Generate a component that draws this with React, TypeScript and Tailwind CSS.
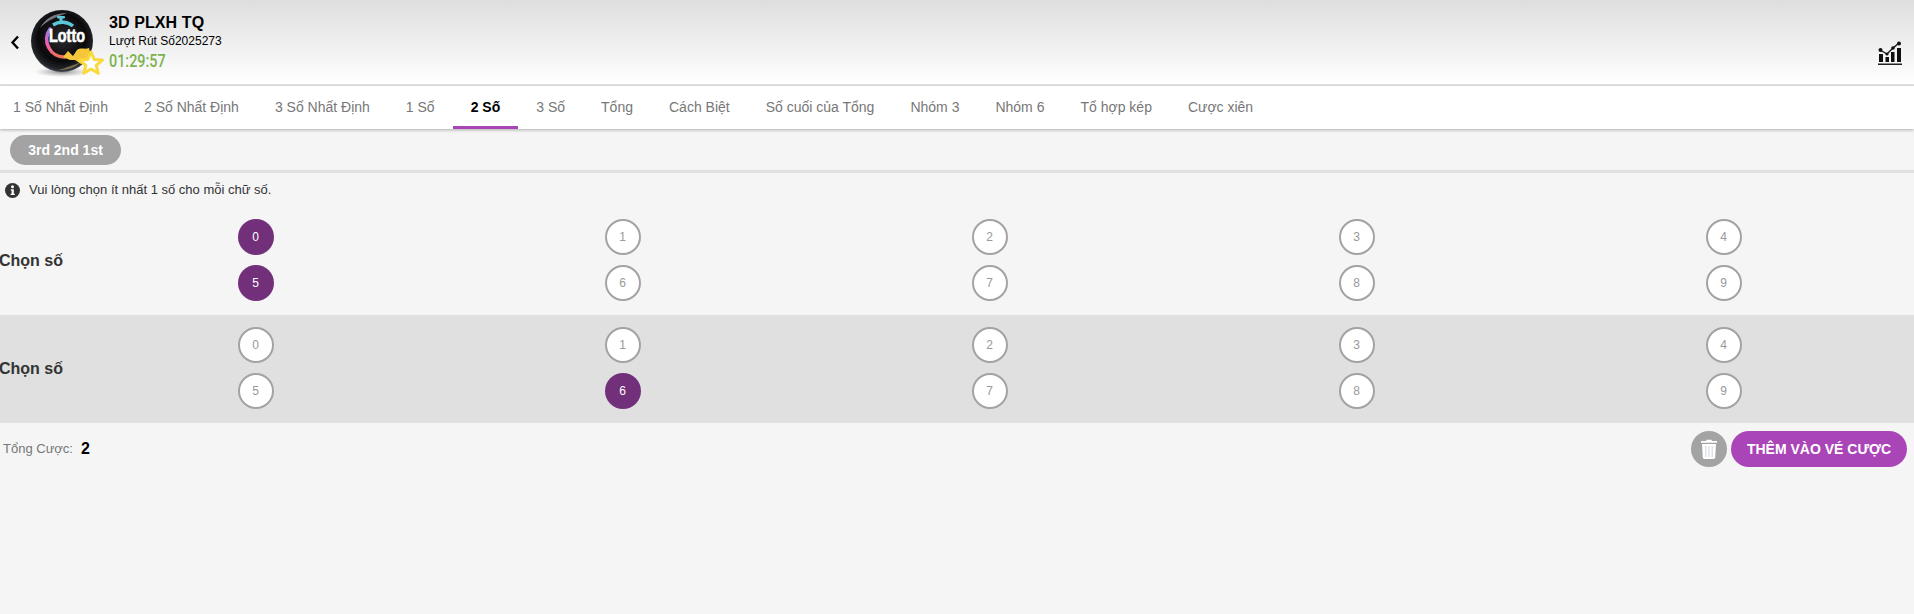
import React from "react";

const tabs = [
  "1 Số Nhất Định",
  "2 Số Nhất Định",
  "3 Số Nhất Định",
  "1 Số",
  "2 Số",
  "3 Số",
  "Tổng",
  "Cách Biệt",
  "Số cuối của Tổng",
  "Nhóm 3",
  "Nhóm 6",
  "Tổ hợp kép",
  "Cược xiên",
];

const LottoLogo = () => (
  <svg width="76" height="68" viewBox="0 0 76 68" className="shrink-0">
    <defs>
      <radialGradient id="ball" cx="50%" cy="45%" r="55%">
        <stop offset="0%" stopColor="#2a2a2e" />
        <stop offset="70%" stopColor="#0a0a0c" />
        <stop offset="92%" stopColor="#23252b" />
        <stop offset="100%" stopColor="#4a4d55" />
      </radialGradient>
      <radialGradient id="shade" cx="50%" cy="50%" r="50%">
        <stop offset="0%" stopColor="#555" stopOpacity="0.65" />
        <stop offset="100%" stopColor="#888" stopOpacity="0" />
      </radialGradient>
      <linearGradient id="ring" x1="0" y1="0" x2="0.4" y2="1">
        <stop offset="0%" stopColor="#8f7be0" />
        <stop offset="45%" stopColor="#f060b0" />
        <stop offset="100%" stopColor="#f2705c" />
      </linearGradient>
    </defs>
    <ellipse cx="31" cy="62" rx="28" ry="5" fill="url(#shade)" />
    <circle cx="31" cy="31" r="31" fill="url(#ball)" />
    <path d="M9 18 C14 8 24 3 36 3 C28 6 16 10 9 18Z" fill="#9a9aa0" opacity="0.75" />
    <path d="M50 52 C44 58 36 60 28 60 C36 57 44 55 50 52Z" fill="#c9b070" opacity="0.55" />
    <path d="M19 19 A17 17 0 0 0 18 38 A17 17 0 0 0 34 47" fill="none" stroke="url(#ring)" strokeWidth="3.5" strokeLinecap="round" />
    <path d="M22 15 A17 17 0 0 1 42 16" fill="none" stroke="#5cc7d8" strokeWidth="3.5" />
    <rect x="26" y="6" width="8" height="2.5" rx="1" fill="#5cc7d8" />
    <rect x="28.5" y="8" width="3" height="4" fill="#5cc7d8" />
    <path d="M32 47 L37 41 L42 46 L46 40 C50 37 54 40 58 38 L60 46 L50 54 L44 50 L39 50Z" fill="#f5c63a" />
    <text x="36" y="32" textAnchor="middle" fontFamily="'Liberation Sans', sans-serif" fontWeight="700" fontSize="19" fill="#fff" textLength="36" lengthAdjust="spacingAndGlyphs" stroke="#fff" strokeWidth="0.7">
      Lotto
    </text>
    <path d="M60 42 L63.2 49.4 L71.5 50 L65.2 55.3 L67.3 63.3 L60 59 L52.7 63.3 L54.8 55.3 L48.5 50 L56.8 49.4Z" fill="#fff" stroke="#fbd93c" strokeWidth="3" strokeLinejoin="round" />
  </svg>
);

const ChartIcon = () => (
  <svg width="24" height="24" viewBox="0 0 24 24">
    <path d="M2 9 L9 13 L15 7 L21 2" fill="none" stroke="#111" strokeWidth="1.4" />
    <circle cx="2.5" cy="9" r="2" fill="#111" />
    <circle cx="9" cy="13" r="1.6" fill="#111" />
    <circle cx="15" cy="7" r="1.8" fill="#111" />
    <circle cx="21" cy="2.5" r="2" fill="#111" />
    <rect x="1" y="13" width="4" height="8" fill="#111" />
    <rect x="7.5" y="16" width="3.5" height="5" fill="#111" />
    <rect x="13" y="11" width="3.5" height="10" fill="#111" />
    <rect x="19" y="7" width="4" height="14" fill="#111" />
    <rect x="0" y="22.5" width="24" height="1.5" fill="#222" />
  </svg>
);

const TrashIcon = () => (
  <svg width="16" height="20" viewBox="0 0 16 20">
    <path d="M0 2 H5 L5.6 0.8 H10.4 L11 2 H16 V3.8 H0Z" fill="#fff" />
    <path d="M1 5 H15 L14.2 18.6 Q14.1 20 12.7 20 H3.3 Q1.9 20 1.8 18.6Z" fill="#fff" />
    <path d="M4.8 7 V18 M8 7 V18 M11.2 7 V18" stroke="#d5dbe3" strokeWidth="1.2" />
  </svg>
);

const InfoIcon = () => (
  <svg width="15" height="15" viewBox="0 0 15 15" className="shrink-0">
    <circle cx="7.5" cy="7.5" r="7.5" fill="#333" />
    <circle cx="7.5" cy="3.8" r="1.5" fill="#fff" />
    <path d="M5.8 6.2 H8.8 V10.8 H9.8 V12 H5.6 V10.8 H6.6 V7.4 H5.8Z" fill="#fff" />
  </svg>
);

const NumberBall = ({ n, active }: { n: number; active: boolean }) => (
  <div
    className={
      active
        ? "w-9 h-9 rounded-full bg-[#722f7a] text-white flex items-center justify-center text-xs"
        : "w-9 h-9 rounded-full bg-white border-2 border-[#a3a3a3] text-[#999] flex items-center justify-center text-xs"
    }
  >
    {n}
  </div>
);

const PickRow = ({ selected, shaded }: { selected: number[]; shaded?: boolean }) => (
  <div className={shaded ? "flex h-[108px] pt-3 bg-[#e0e0e0]" : "flex h-[108px] pt-3"}>
    <div className="w-[73px] shrink-0 h-[84px] flex items-center -ml-px">
      <span className="text-base font-bold text-[#333] whitespace-nowrap">Chọn số</span>
    </div>
    <div className="flex-1 mr-[7px] grid grid-cols-5 gap-y-2.5 h-[82px] content-start">
      {[0, 1, 2, 3, 4, 5, 6, 7, 8, 9].map((n) => (
        <div key={n} className="flex justify-center">
          <NumberBall n={n} active={selected.includes(n)} />
        </div>
      ))}
    </div>
  </div>
);

export default function App() {
  return (
    <div className="w-[1914px] h-[614px] overflow-hidden bg-[#f5f5f5] font-['Liberation_Sans',Arial,sans-serif]">
      <header className="h-[86px] bg-gradient-to-b from-[#dedede] to-white border-b-2 border-[#e3e3e3] flex items-center pr-3">
        <svg width="10" height="15" viewBox="0 0 10 15" className="ml-[10px] mt-[1px] shrink-0">
          <path d="M8 1.5 L2.5 7.5 L8 13.5" fill="none" stroke="#000" strokeWidth="2.4" />
        </svg>
        <div className="ml-[11px] mt-[4px] shrink-0">
          <LottoLogo />
        </div>
        <div className="ml-[2px] flex flex-col">
          <div className="text-base font-bold text-black leading-5 tracking-[0.1px]">3D PLXH TQ</div>
          <div className="text-xs text-black leading-[17px]">Lượt Rút Số2025273</div>
          <div className="text-[18px] font-['Roboto',sans-serif] font-medium text-[#7cb24e] leading-[21px] origin-left scale-x-[0.8]">
            01:29:57
          </div>
        </div>
        <div className="ml-auto mt-[22px]">
          <ChartIcon />
        </div>
      </header>

      <nav className="h-[43px] bg-white flex shadow-[0_1px_3px_rgba(0,0,0,0.3)] relative">
        {tabs.map((t) => (
          <div
            key={t}
            className={
              t === "2 Số"
                ? "px-[18px] flex items-center text-sm font-bold text-black border-b-[3px] border-[#aa45b8] pt-px"
                : "px-[18px] flex items-center text-sm text-[#777] pb-[2px] first:pl-[13px]"
            }
          >
            {t}
          </div>
        ))}
      </nav>

      <div className="h-[44px] pt-[6px] pl-[10px] border-b-[3px] border-[#e0e0e0]">
        <div className="w-[111px] h-[30px] rounded-full bg-[#a3a3a3] text-white text-sm font-bold flex items-center justify-center">
          3rd 2nd 1st
        </div>
      </div>

      <div className="h-[34px] pl-[5px] flex items-center gap-[9px] text-[13px] text-[#333]">
        <InfoIcon />
        <span>Vui lòng chọn ít nhất 1 số cho mỗi chữ số.</span>
      </div>

      <PickRow selected={[0, 5]} />
      <PickRow selected={[6]} shaded />

      <div className="flex items-center justify-between h-[36px] mt-2 pl-[3px] pr-[7px]">
        <div className="flex items-center">
          <span className="text-[13px] text-[#777]">Tổng Cược:</span>
          <span className="ml-2 text-base font-bold text-black">2</span>
        </div>
        <div className="flex items-center gap-1">
          <div className="w-9 h-9 rounded-full bg-[#a3a3a3] flex items-center justify-center">
            <TrashIcon />
          </div>
          <div className="w-[176px] h-9 rounded-full bg-[#aa45b8] text-white text-sm font-bold flex items-center justify-center">
            THÊM VÀO VÉ CƯỢC
          </div>
        </div>
      </div>
    </div>
  );
}
